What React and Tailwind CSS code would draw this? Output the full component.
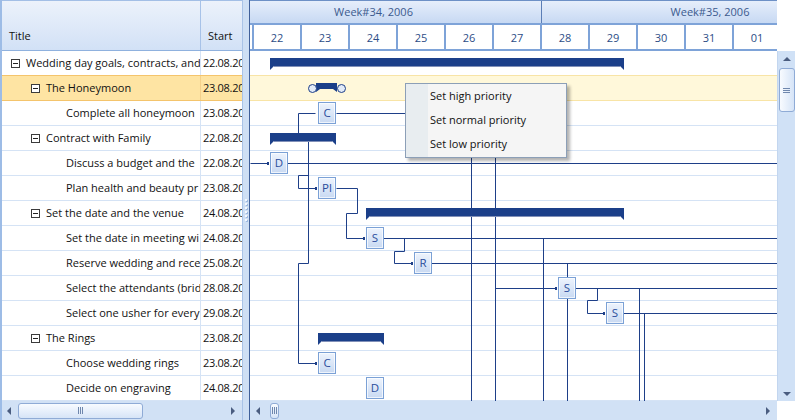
import React from 'react';

const rows = [
  { level: 1, title: 'Wedding day goals, contracts, and', start: '22.08.2006' },
  { level: 2, title: 'The Honeymoon', start: '23.08.2006', selected: true },
  { level: 3, title: 'Complete all honeymoon', start: '23.08.2006' },
  { level: 2, title: 'Contract with Family', start: '22.08.2006' },
  { level: 3, title: 'Discuss a budget and the', start: '22.08.2006' },
  { level: 3, title: 'Plan health and beauty pr', start: '23.08.2006' },
  { level: 2, title: 'Set the date and the venue', start: '24.08.2006' },
  { level: 3, title: 'Set the date in meeting wi', start: '24.08.2006' },
  { level: 3, title: 'Reserve wedding and rece', start: '25.08.2006' },
  { level: 3, title: 'Select the attendants (brid', start: '28.08.2006' },
  { level: 3, title: 'Select one usher for every', start: '29.08.2006' },
  { level: 2, title: 'The Rings', start: '23.08.2006' },
  { level: 3, title: 'Choose wedding rings', start: '23.08.2006' },
  { level: 3, title: 'Decide on engraving', start: '24.08.2006' },
];

const indent = { 1: 'pl-[9px]', 2: 'pl-[29px]', 3: 'pl-[64px]' };

const days = ['21', '22', '23', '24', '25', '26', '27', '28', '29', '30', '31', '01', '02'];

const LINK = '#1e3f88';

// connector routes, page coordinates
const links = [
  [[250, 163], [267, 163]],
  [[287, 163], [777, 163]],
  [[298, 133], [298, 113], [315, 113]],
  [[336, 113], [495, 113], [495, 401]],
  [[471, 113], [471, 401]],
  [[308, 141], [308, 263], [298, 263], [298, 363], [315, 363]],
  [[308, 175], [298, 175], [298, 188], [315, 188]],
  [[336, 188], [357, 188], [357, 213], [346, 213], [346, 238], [363, 238]],
  [[383, 238], [777, 238]],
  [[404, 238], [404, 251], [394, 251], [394, 263], [411, 263]],
  [[431, 263], [777, 263]],
  [[543, 238], [543, 401]],
  [[567, 263], [567, 401]],
  [[495, 288], [555, 288]],
  [[575, 288], [777, 288]],
  [[597, 288], [597, 300], [587, 300], [587, 313], [603, 313]],
  [[639, 288], [639, 401]],
  [[644, 313], [644, 401]],
  [[623, 313], [777, 313]],
];

const tasks = [
  { x: 318, y: 102, label: 'C' },
  { x: 270, y: 152, label: 'D', dot: true },
  { x: 318, y: 177, label: 'Pl', dot: true },
  { x: 366, y: 227, label: 'S', dot: true },
  { x: 414, y: 252, label: 'R', dot: true },
  { x: 558, y: 277, label: 'S', dot: true },
  { x: 606, y: 302, label: 'S', dot: true },
  { x: 318, y: 352, label: 'C', dot: true },
  { x: 366, y: 377, label: 'D' },
];

const summaries = [
  { x1: 270, x2: 624, y: 58 },
  { x1: 270, x2: 336, y: 133 },
  { x1: 366, x2: 624, y: 208 },
  { x1: 318, x2: 384, y: 333 },
];

function SummaryBar({ x1, x2, y }) {
  return (
    <g>
      <path d={`M${x1} ${y} H${x2} V${y + 12} L${x2 - 4} ${y + 8} H${x1 + 4} L${x1} ${y + 12} Z`} fill="#1b3f89" />
      <line x1={x1 + 4} x2={x2 - 4} y1={y + 8.5} y2={y + 8.5} stroke="#8190b8" />
    </g>
  );
}

function TaskBox({ x, y, label, dot }) {
  return (
    <g>
      {dot && <rect x={x - 3} y={y + 10} width="2" height="3" fill={LINK} />}
      <rect x={x + 0.5} y={y + 0.5} width="17" height="21" fill="url(#taskFill)" stroke="#7ba1d6" />
      <rect x={x + 1.5} y={y + 1.5} width="15" height="19" fill="none" stroke="#ffffff" strokeOpacity="0.7" />
      <text x={x + 9} y={y + 15} textAnchor="middle" fontSize="11.5" fill="#2a4d9c" fontFamily="Open Sans, sans-serif">
        {label}
      </text>
    </g>
  );
}

function Chart() {
  return (
    <svg className="absolute inset-0" width="527" height="350" viewBox="250 51 527 350">
      <defs>
        <linearGradient id="taskFill" x1="0" y1="0" x2="0" y2="1">
          <stop offset="0" stopColor="#eef4fd" />
          <stop offset="1" stopColor="#c8d9f2" />
        </linearGradient>
      </defs>
      <g transform="translate(0.5 0.5)" fill="none" stroke={LINK} strokeWidth="1">
        {links.map((pts, i) => (
          <polyline key={i} points={pts.map((p) => p.join(',')).join(' ')} />
        ))}
      </g>
      {summaries.map((s, i) => (
        <SummaryBar key={i} {...s} />
      ))}
      {/* selected honeymoon summary with resize handles */}
      <path d="M316 83 H337 V92 L333 89 H320 L316 92 Z" fill="#1b3f89" />
      <circle cx="312.5" cy="88.5" r="4" fill="#e2ebf8" stroke={LINK} />
      <circle cx="341.5" cy="88.5" r="4" fill="#e2ebf8" stroke={LINK} />
      {tasks.map((t, i) => (
        <TaskBox key={i} {...t} />
      ))}
    </svg>
  );
}

function Expander() {
  return (
    <span className="mr-[6px] flex h-[9px] w-[9px] shrink-0 items-center justify-center border border-[#3b3b3b] bg-white">
      <span className="h-px w-[5px] bg-[#222]" />
    </span>
  );
}

function Grip() {
  return (
    <span className="flex gap-[1px]">
      <span className="h-[7px] w-px bg-[#6f87ad]" />
      <span className="h-[7px] w-px bg-[#6f87ad]" />
      <span className="h-[7px] w-px bg-[#6f87ad]" />
    </span>
  );
}

function HThumb({ className }) {
  return (
    <div
      className={`flex h-[16px] items-center justify-center rounded-[3px] border border-[#8fabd6] bg-linear-to-b from-[#f8fbff] to-[#d6e4f7] ${className}`}
    >
      <Grip />
    </div>
  );
}

const arrowLeft = 'h-0 w-0 border-y-[4px] border-r-[4px] border-y-transparent border-r-[#4a5d80]';
const arrowRight = 'h-0 w-0 border-y-[4px] border-l-[4px] border-y-transparent border-l-[#4a5d80]';

function TreeGrid() {
  return (
    <div className="flex h-full w-[242px] shrink-0 flex-col border-l-2 border-[#9dbce6]">
      <div className="flex h-[51px] shrink-0 border-y border-t-[#a3bfe6] border-b-[#8fb1de] bg-linear-to-b from-[#ecf2fb] to-[#d2e1f6] text-[#111]">
        <div className="flex w-[199px] items-end border-r border-[#a7c2e8] pb-[6px] pl-[7px]">Title</div>
        <div className="flex flex-1 items-end pb-[6px] pl-[7px]">Start</div>
      </div>
      {rows.map((r, i) => {
        const nextSel = rows[i + 1] && rows[i + 1].selected;
        return (
          <div
            key={i}
            className={`flex h-[25px] shrink-0 border-b ${
              r.selected ? 'border-[#f4c46c] bg-[#fee4a3]' : nextSel ? 'border-[#f4c46c]' : 'border-[#d5e3f5]'
            }`}
          >
            <div
              className={`flex w-[199px] items-center overflow-hidden whitespace-nowrap border-r ${
                r.selected ? 'border-[#f4d08a]' : 'border-[#d5e3f5]'
              } ${indent[r.level]}`}
            >
              {r.level < 3 && <Expander />}
              <span>{r.title}</span>
            </div>
            <div className="flex flex-1 items-center overflow-hidden whitespace-nowrap pl-[2px] tracking-[-0.3px]">
              {r.start}
            </div>
          </div>
        );
      })}
      <div className="flex h-[19px] shrink-0 items-center bg-[#d1e1f5] pl-[5px] pr-[7px]">
        <span className={arrowLeft} />
        <HThumb className="ml-[7px] w-[125px]" />
        <span className="flex-1" />
        <span className={arrowRight} />
      </div>
    </div>
  );
}

function Splitter() {
  return (
    <div className="flex h-full w-[7px] shrink-0 flex-col items-center justify-center gap-[2px] border-l border-[#a9c3e7] bg-[#cedff4]">
      {[0, 1, 2, 3, 4, 5].map((i) => (
        <span key={i} className="h-[2px] w-[2px] bg-[#f4f8fe] shadow-[1px_1px_0_#9db9e0]" />
      ))}
    </div>
  );
}

function GanttHeader() {
  return (
    <div className="flex h-[51px] shrink-0">
      <div className="w-[527px] overflow-hidden">
        <div className="h-[25px] border-t border-b-2 border-t-[#6d90c6] border-b-[#7ea3d8] bg-linear-to-b from-[#e6eefb] to-[#c7d9f3]">
          <div className="ml-[-44px] flex h-full text-[#3c5a8e]">
            <div className="flex w-[336px] shrink-0 items-center justify-center border-r border-[#5b7eb6]">Week#34, 2006</div>
            <div className="flex w-[336px] shrink-0 items-center justify-center">Week#35, 2006</div>
          </div>
        </div>
        <div className="h-[26px] border-b-2 border-[#7ea3d8] bg-white">
          <div className="ml-[-44px] flex h-full text-[#2d4d86]">
            {days.map((d) => (
              <div key={d} className="flex w-[48px] shrink-0 items-center justify-center border-r-2 border-[#7ea3d8] pt-[2px]">
                {d}
              </div>
            ))}
          </div>
        </div>
      </div>
      <div className="w-[18px] bg-white" />
    </div>
  );
}

function ContextMenu() {
  return (
    <div className="absolute left-[155px] top-[32px] flex h-[75px] w-[162px] border border-[#8c9fb7] bg-[#f5f5f5] shadow-[3px_3px_3px_rgba(0,0,0,0.3)]">
      <div className="w-[22px] bg-[#e8edf0]" />
      <div className="flex flex-col text-[#111]">
        {['Set high priority', 'Set normal priority', 'Set low priority'].map((t) => (
          <div key={t} className="flex h-[24px] items-center pl-[2px]">
            {t}
          </div>
        ))}
      </div>
    </div>
  );
}

function VScroll() {
  return (
    <div className="flex w-[18px] shrink-0 flex-col items-center border-l border-[#c3d6ef] bg-[#d0e1f6] pb-[5px] pt-[6px]">
      <span className="h-0 w-0 border-x-[4px] border-b-[4px] border-x-transparent border-b-[#4a5d80]" />
      <div className="mt-[7px] flex h-[44px] w-[16px] flex-col items-center justify-center gap-[1px] rounded-[3px] border border-[#8fabd6] bg-linear-to-r from-[#f8fbff] to-[#d6e4f7]">
        <span className="h-px w-[7px] bg-[#6f87ad]" />
        <span className="h-px w-[7px] bg-[#6f87ad]" />
        <span className="h-px w-[7px] bg-[#6f87ad]" />
      </div>
      <span className="flex-1" />
      <span className="h-0 w-0 border-x-[4px] border-t-[4px] border-x-transparent border-t-[#4a5d80]" />
    </div>
  );
}

function Gantt() {
  return (
    <div className="flex h-full w-[546px] shrink-0 flex-col border-l border-[#40609a]">
      <GanttHeader />
      <div className="flex h-[350px] shrink-0">
        <div className="relative w-[527px] overflow-hidden bg-white">
          {rows.map((r, i) => {
            const nextSel = rows[i + 1] && rows[i + 1].selected;
            return (
              <div
                key={i}
                className={`h-[25px] border-b ${
                  r.selected ? 'border-[#f8e4a6] bg-[#fff8da]' : nextSel ? 'border-[#f8e4a6]' : 'border-[#d5e3f5]'
                }`}
              />
            );
          })}
          <Chart />
          <ContextMenu />
        </div>
        <VScroll />
      </div>
      <div className="flex h-[19px] shrink-0">
        <div className="flex w-[527px] items-center bg-[#d1e1f5] pl-[6px] pr-[7px]">
          <span className={arrowLeft} />
          <HThumb className="ml-[10px] w-[9px]" />
          <span className="flex-1" />
          <span className={arrowRight} />
        </div>
        <div className="w-[18px] bg-white" />
      </div>
    </div>
  );
}

export default function App() {
  return (
    <div className="flex h-[420px] w-[795px] overflow-hidden bg-white font-['Open_Sans',sans-serif] text-[11px] text-[#111]">
      <TreeGrid />
      <Splitter />
      <Gantt />
    </div>
  );
}
